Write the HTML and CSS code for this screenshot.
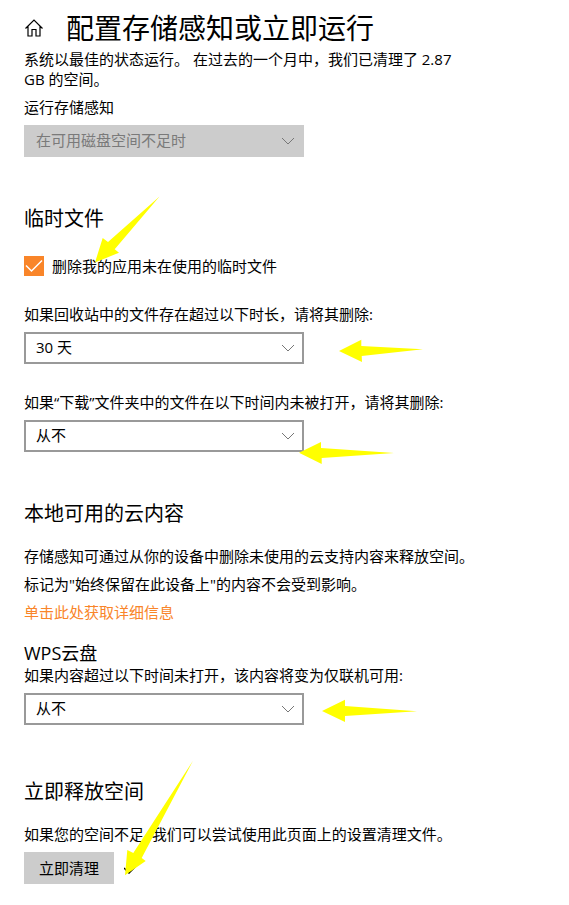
FILE: index.html
```
<!DOCTYPE html>
<html lang="zh-CN">
<head>
    <meta charset="UTF-8">
    <meta name="viewport" content="width=device-width, initial-scale=1.0">
    <title>配置存储感知或立即运行</title>
    <link rel="stylesheet" href="styles.css">
</head>
<body>

<main class="page">
    <header class="page-header">
        <a class="home-link" href="#" aria-label="主页">
            <svg viewBox="0 0 20 20" width="20" height="20">
                <path d="M1.5 10.5 L10 2 L18.5 10.5 M4 8.5 V18 H8 V11.5 H12 V18 H16 V8.5"/>
            </svg>
        </a>
        <h1>配置存储感知或立即运行</h1>
    </header>

    <p class="status">系统以最佳的状态运行。 在过去的一个月中，我们已清理了 2.87 GB 的空间。</p>

    <div class="field">
        <label for="run-sense">运行存储感知</label>
        <div class="select-box">
            <select id="run-sense" disabled>
                <option>在可用磁盘空间不足时</option>
            </select>
            <svg class="chevron" viewBox="0 0 12 8" width="12" height="8"><path d="M0 1 L6 7 L12 1"/></svg>
        </div>
    </div>

    <section class="section">
        <h2>临时文件</h2>
        <div class="check-row">
            <input type="checkbox" id="delete-temp" checked>
            <svg class="tick" viewBox="0 0 20 20" width="20" height="20"><path d="M2 9.5 L7.5 15 L18 4.5"/></svg>
            <label for="delete-temp">删除我的应用未在使用的临时文件</label>
        </div>
        <div class="field spaced">
            <label for="recycle-bin">如果回收站中的文件存在超过以下时长，请将其删除:</label>
            <div class="select-box">
                <select id="recycle-bin">
                    <option>30 天</option>
                </select>
                <svg class="chevron" viewBox="0 0 12 8" width="12" height="8"><path d="M0 1 L6 7 L12 1"/></svg>
            </div>
        </div>
        <div class="field spaced">
            <label for="downloads">如果“下载”文件夹中的文件在以下时间内未被打开，请将其删除:</label>
            <div class="select-box">
                <select id="downloads">
                    <option>从不</option>
                </select>
                <svg class="chevron" viewBox="0 0 12 8" width="12" height="8"><path d="M0 1 L6 7 L12 1"/></svg>
            </div>
        </div>
    </section>

    <section class="section">
        <h2>本地可用的云内容</h2>
        <div class="cloud-info">
            <p>存储感知可通过从你的设备中删除未使用的云支持内容来释放空间。</p>
            <p>标记为"始终保留在此设备上"的内容不会受到影响。</p>
            <a class="more-link" href="#">单击此处获取详细信息</a>
        </div>
        <h3>WPS云盘</h3>
        <div class="field">
            <label for="wps-drive">如果内容超过以下时间未打开，该内容将变为仅联机可用:</label>
            <div class="select-box">
                <select id="wps-drive">
                    <option>从不</option>
                </select>
                <svg class="chevron" viewBox="0 0 12 8" width="12" height="8"><path d="M0 1 L6 7 L12 1"/></svg>
            </div>
        </div>
    </section>

    <section class="section last">
        <h2>立即释放空间</h2>
        <p class="clean-text">如果您的空间不足, 我们可以尝试使用此页面上的设置清理文件。</p>
        <div class="clean-row">
            <button class="clean-btn" type="button">立即清理</button>
            <svg class="done" viewBox="0 0 16 12" width="16" height="12"><path d="M0 6 L5 11 L14 2"/></svg>
        </div>
    </section>

    <!-- yellow pointer arrows -->
    <svg class="arrows" viewBox="0 0 569 905" width="569" height="905" aria-hidden="true">
        <polygon points="159.5,196.5 108,242 102.7,238 95,262.5 119,252.7 114.7,249.3"/>
        <polygon points="339,351 361.3,339.7 361.3,346 423,349.3 361.7,356 362,362"/>
        <polygon points="299,452.7 321,442 321,448 394,453 321.7,458 321.7,464"/>
        <polygon points="322,711 345,699.7 345,706 417,711.3 345,716 345,722"/>
        <polygon points="193,760.7 133.3,853 127.3,850 125,875.3 145.7,861 141.7,858"/>
    </svg>
</main>

</body>
</html>
```
FILE: styles.css
```
:root {
    --accent: #f98529;
    --border: #999999;
    --fill: #cccccc;
}
* {
    box-sizing: border-box;
}
body {
    margin: 0;
    background-color: #fff;
    color: #000;
    font-family: "Open Sans", "Noto Sans CJK SC", sans-serif;
    font-size: 15px;
    line-height: 20px;
}
h1, h2, h3, p {
    margin: 0;
    font-weight: normal;
}
h1 {
    font-size: 28px;
    line-height: 36px;
}
h2 {
    font-size: 20px;
    line-height: 28px;
}
h3 {
    margin-top: 19px;
    font-size: 18px;
    line-height: 24px;
}
label {
    display: block;
}
.page {
    position: relative;
    padding: 10px 24px 20px;
}
.page-header {
    display: flex;
    align-items: center;
    gap: 22px;
    margin-bottom: 3px;
}
.home-link {
    display: block;
    height: 20px;
}
.home-link svg {
    fill: none;
    stroke: #000;
    stroke-width: 1.2;
}
.status {
    max-width: 440px;
    margin-bottom: 8px;
}
.select-box {
    position: relative;
    width: 280px;
    max-width: 100%;
    margin-top: 8px;
}
.select-box select {
    display: block;
    width: 100%;
    height: 32px;
    padding: 0 30px 2px 10px;
    border: 2px solid var(--border);
    border-radius: 0;
    background-color: #fff;
    color: #000;
    font: inherit;
    appearance: none;
}
.select-box select:disabled {
    border-color: var(--fill);
    background-color: var(--fill);
    color: #7a7a7a;
    opacity: 1;
}
.chevron {
    position: absolute;
    top: 12px;
    right: 10px;
    fill: none;
    stroke: #777;
    pointer-events: none;
}
.section {
    margin-top: 48px;
}
.section.last {
    margin-top: 53px;
}
.check-row {
    position: relative;
    display: flex;
    align-items: center;
    gap: 8px;
    margin-top: 23px;
}
.check-row input {
    width: 20px;
    height: 20px;
    margin: 0;
    background-color: var(--accent);
    appearance: none;
}
.tick {
    position: absolute;
    top: 0;
    left: 0;
    fill: none;
    stroke: #fff;
    stroke-width: 1.5;
    pointer-events: none;
}
.check-row input:not(:checked) + .tick {
    display: none;
}
.field.spaced {
    margin-top: 28px;
}
.cloud-info {
    display: flex;
    flex-direction: column;
    align-items: flex-start;
    gap: 8px;
    margin-top: 18px;
}
.more-link {
    color: var(--accent);
    text-decoration: none;
}
.clean-text {
    margin-top: 18px;
}
.clean-row {
    display: flex;
    align-items: center;
    gap: 10px;
    margin-top: 8px;
}
.clean-btn {
    height: 32px;
    padding: 0 15px;
    border: none;
    background-color: var(--fill);
    color: #000;
    font: inherit;
}
.done {
    fill: none;
    stroke: #000;
    stroke-width: 1.5;
}
.arrows {
    position: absolute;
    top: 0;
    left: 0;
    fill: #ffff00;
    pointer-events: none;
}
```
